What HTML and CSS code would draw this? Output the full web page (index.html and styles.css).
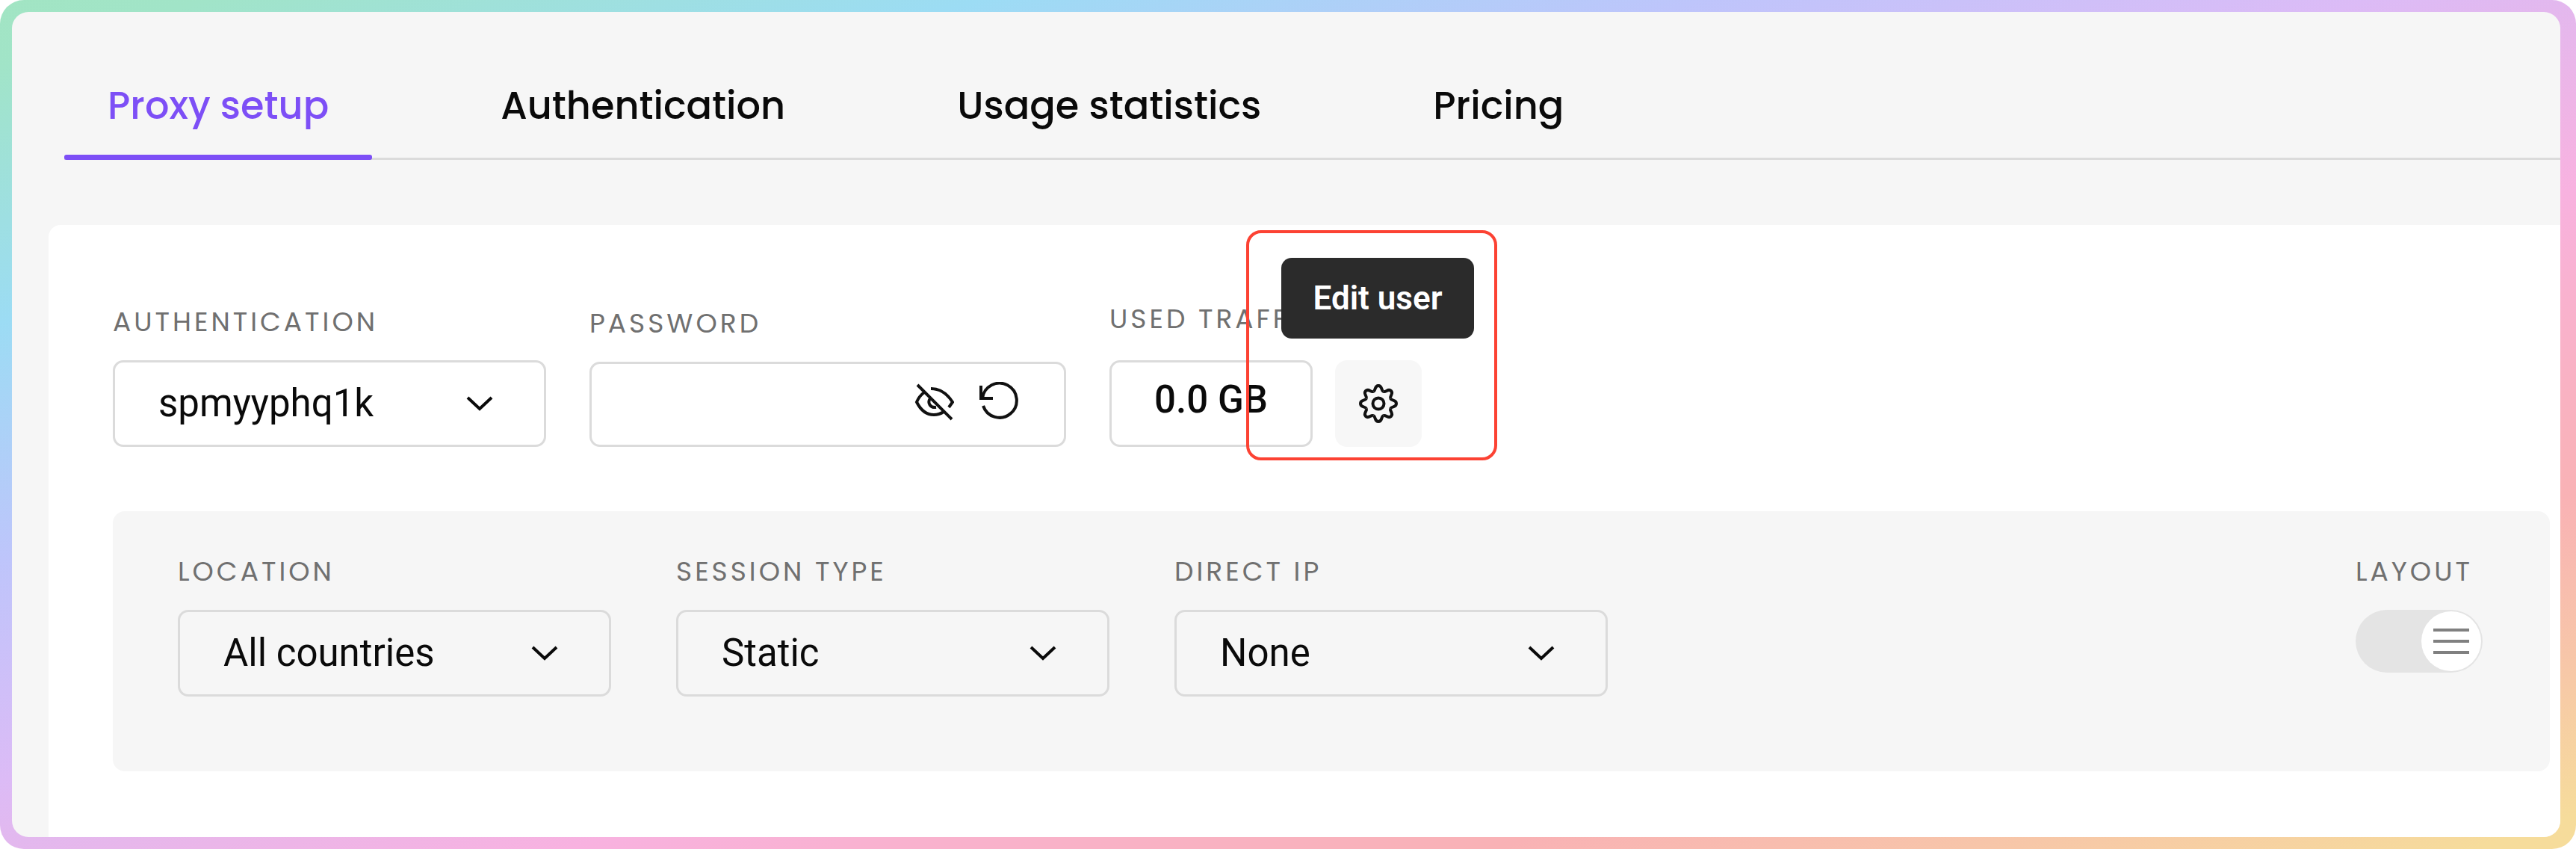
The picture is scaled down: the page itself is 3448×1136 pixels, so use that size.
FILE: index.html
```html
<!DOCTYPE html>
<html lang="en">
<head>
<meta charset="utf-8">
<meta name="viewport" content="width=device-width, initial-scale=1">
<title>Proxy setup</title>
<link rel="stylesheet" href="styles.css">
</head>
<body>
<div class="frame">
  <main class="page">
    <nav class="tabs">
      <a class="tab tab--active" href="#setup" aria-current="page">Proxy setup</a>
      <a class="tab" href="#authentication">Authentication</a>
      <a class="tab" href="#usage">Usage statistics</a>
      <a class="tab" href="#pricing">Pricing</a>
    </nav>

    <section class="card">
      <div class="user-row">
        <div class="field">
          <label class="label" for="user">AUTHENTICATION</label>
          <div class="select">
            <select class="control" id="user"><option>spmyyphq1k</option></select>
            <svg class="chevron" viewBox="0 0 36 20" aria-hidden="true"><path d="M2 2l16 15L34 2"/></svg>
          </div>
        </div>

        <div class="field field--password">
          <label class="label" for="password">PASSWORD</label>
          <div class="password">
            <input class="password-input" id="password" type="password">
            <button class="icon-button" type="button" aria-label="Show password">
              <svg class="icon" viewBox="-2 -2 54 54" aria-hidden="true">
                <path d="M3 2l46 46M12 12C8 15 4 20 2 25c5 10 13 17 23 17 6 0 10-2 13-4M21 7c12 0 22 7 29 18l-5 7M20 20c-4 6 0 13 8 12"/>
              </svg>
            </button>
            <button class="icon-button" type="button" aria-label="Regenerate password">
              <svg class="icon" viewBox="-2 -2 54 54" aria-hidden="true">
                <path d="M5 30a23 23 0 1 0-1-10M2 3v17h16"/>
              </svg>
            </button>
          </div>
        </div>

        <div class="field field--traffic">
          <span class="label" id="traffic-label">USED TRAFFIC</span>
          <output class="traffic" aria-labelledby="traffic-label">0.0 GB</output>
        </div>

        <div class="edit">
          <button class="edit-button" type="button" aria-describedby="edit-tip" aria-label="Edit user">
            <svg class="icon" viewBox="-27 -27 54 54" aria-hidden="true">
              <defs><path id="tooth" d="M-6.7-16.2C-3.2-17.6-5.5-24 0-24S3.2-17.6 6.7-16.2"/></defs>
              <use href="#tooth"/>
              <use href="#tooth" transform="rotate(45)"/>
              <use href="#tooth" transform="rotate(90)"/>
              <use href="#tooth" transform="rotate(135)"/>
              <use href="#tooth" transform="rotate(180)"/>
              <use href="#tooth" transform="rotate(225)"/>
              <use href="#tooth" transform="rotate(270)"/>
              <use href="#tooth" transform="rotate(315)"/>
              <circle r="7.5"/>
            </svg>
          </button>
          <div class="tooltip" id="edit-tip" role="tooltip">Edit user</div>
          <div class="highlight"></div>
        </div>
      </div>

      <div class="filters">
        <div class="field">
          <label class="label" for="location">LOCATION</label>
          <div class="select">
            <select class="control" id="location"><option>All countries</option></select>
            <svg class="chevron" viewBox="0 0 36 20" aria-hidden="true"><path d="M2 2l16 15L34 2"/></svg>
          </div>
        </div>
        <div class="field">
          <label class="label" for="session">SESSION TYPE</label>
          <div class="select">
            <select class="control" id="session"><option>Static</option></select>
            <svg class="chevron" viewBox="0 0 36 20" aria-hidden="true"><path d="M2 2l16 15L34 2"/></svg>
          </div>
        </div>
        <div class="field">
          <label class="label" for="direct-ip">DIRECT IP</label>
          <div class="select">
            <select class="control" id="direct-ip"><option>None</option></select>
            <svg class="chevron" viewBox="0 0 36 20" aria-hidden="true"><path d="M2 2l16 15L34 2"/></svg>
          </div>
        </div>
        <div class="field field--layout">
          <label class="label" for="layout">LAYOUT</label>
          <div class="toggle">
            <input class="toggle-input" id="layout" type="checkbox" checked>
            <span class="knob">
              <svg class="knob-icon" viewBox="0 0 48 34" aria-hidden="true"><path d="M0 2h48M0 17h48M0 32h48"/></svg>
            </span>
          </div>
        </div>
      </div>
    </section>
  </main>
</div>
</body>
</html>
```
FILE: styles.css
```css
* {
  box-sizing: border-box;
}

body {
  margin: 0;
  background: #fff;
  color: #0a0a0a;
  font-family: Roboto, sans-serif;
}

.frame {
  display: flex;
  min-height: 100vh;
  padding: 16px 21px 16px 16px;
  border-radius: 32px;
  background: linear-gradient(to bottom right,
    #a2e5c3 0%, #a1e4c8 4%, #9cdcf4 19%, #bec5fb 33%, #dcbbf6 46%,
    #e3b8ee 50%, #f8b2e0 61%, #f9b2cf 67%, #f9b2b5 79%, #f7c7a8 89%, #f6dc9b 98%);
}

.page {
  display: flex;
  flex: 1;
  flex-direction: column;
  min-width: 0;
  overflow: hidden;
  border-radius: 22px;
  background: #f6f6f6;
}

.tabs {
  display: flex;
  gap: 114px;
  margin-left: 70px;
  padding-top: 93px;
  box-shadow: inset 0 -3px #dbdbdb;
}

.tab {
  padding: 0 58px;
  color: inherit;
  font: 500 51px/64px Poppins, Inter, sans-serif;
  text-align: center;
  text-decoration: none;
  white-space: nowrap;
}

.tab::after {
  content: "";
  display: block;
  height: 7px;
  margin: 34px -58px 0;
  border-radius: 3px;
}

.tab--active {
  color: #7d4ff6;
}

.tab--active::after {
  background: #7d4ff6;
}

.card {
  flex: 1;
  margin: 87px 0 0 49px;
  padding: 106px 14px 88px 86px;
  border-radius: 16px 0 0 0;
  background: #fff;
}

.user-row {
  display: flex;
  align-items: flex-end;
}

.field {
  display: flex;
  flex-direction: column;
  gap: 31px;
  width: 580px;
}

.label {
  color: #707070;
  font: 400 36px/40px Poppins, Inter, sans-serif;
  letter-spacing: 4px;
  white-space: nowrap;
}

.select {
  display: grid;
  align-items: center;
}

.control,
.chevron {
  grid-area: 1 / 1;
}

.control {
  appearance: none;
  width: 100%;
  height: 116px;
  padding: 0 110px 0 58px;
  border: 3px solid #dbdbdb;
  border-radius: 14px;
  background: transparent;
  color: inherit;
  font: 400 51px/60px Roboto, sans-serif;
}

.chevron {
  justify-self: end;
  width: 36px;
  height: 20px;
  margin-right: 71px;
  fill: none;
  stroke: #0a0a0a;
  stroke-width: 4;
  pointer-events: none;
}

.field--password {
  width: 638px;
  margin-left: 58px;
}

.password {
  display: flex;
  gap: 32px;
  align-items: center;
  height: 114px;
  padding: 0 61px 6px 40px;
  border: 3px solid #dbdbdb;
  border-radius: 14px;
}

.password-input {
  flex: 1;
  min-width: 0;
  height: 80px;
  border: 0;
  background: transparent;
  font: 400 51px/60px Roboto, sans-serif;
}

.icon-button {
  padding: 0;
  border: 0;
  background: none;
}

.icon {
  display: block;
  width: 54px;
  height: 54px;
  fill: none;
  stroke: #111;
  stroke-width: 4;
}

.field--traffic {
  gap: 35px;
  width: 272px;
  margin-left: 58px;
}

.traffic {
  height: 116px;
  padding-top: 20px;
  border: 3px solid #dbdbdb;
  border-radius: 14px;
  font: 500 51px/60px Roboto, sans-serif;
  text-align: center;
}

.edit {
  position: relative;
  margin-left: 30px;
}

.edit-button {
  display: grid;
  place-items: center;
  width: 116px;
  height: 116px;
  padding: 0;
  border: 0;
  border-radius: 16px;
  background: #f7f7f7;
}

.tooltip {
  position: absolute;
  bottom: 145px;
  left: -72px;
  width: 258px;
  padding: 24px 0;
  border-radius: 14px;
  background: #2b2b2b;
  color: #fff;
  font: 600 44px/60px Roboto, sans-serif;
  text-align: center;
}

.highlight {
  position: absolute;
  inset: -174px -101px -18px -119px;
  border: 4px solid #fc4233;
  border-radius: 20px;
  pointer-events: none;
}

.filters {
  display: flex;
  gap: 87px;
  margin-top: 86px;
  padding: 61px 90px 100px 87px;
  border-radius: 16px;
  background: #f6f6f6;
}

.field--layout {
  width: 170px;
  margin-left: auto;
}

.toggle {
  display: grid;
  align-items: center;
}

.toggle-input,
.knob {
  grid-area: 1 / 1;
}

.toggle-input {
  appearance: none;
  width: 170px;
  height: 84px;
  margin: 0;
  border-radius: 42px;
  background: #e4e4e4;
}

.knob {
  display: grid;
  place-items: center;
  justify-self: end;
  width: 80px;
  height: 80px;
  margin-right: 2px;
  border-radius: 50%;
  background: #fff;
  pointer-events: none;
}

.knob-icon {
  width: 48px;
  height: 34px;
  stroke: #808080;
  stroke-width: 4;
}
```
